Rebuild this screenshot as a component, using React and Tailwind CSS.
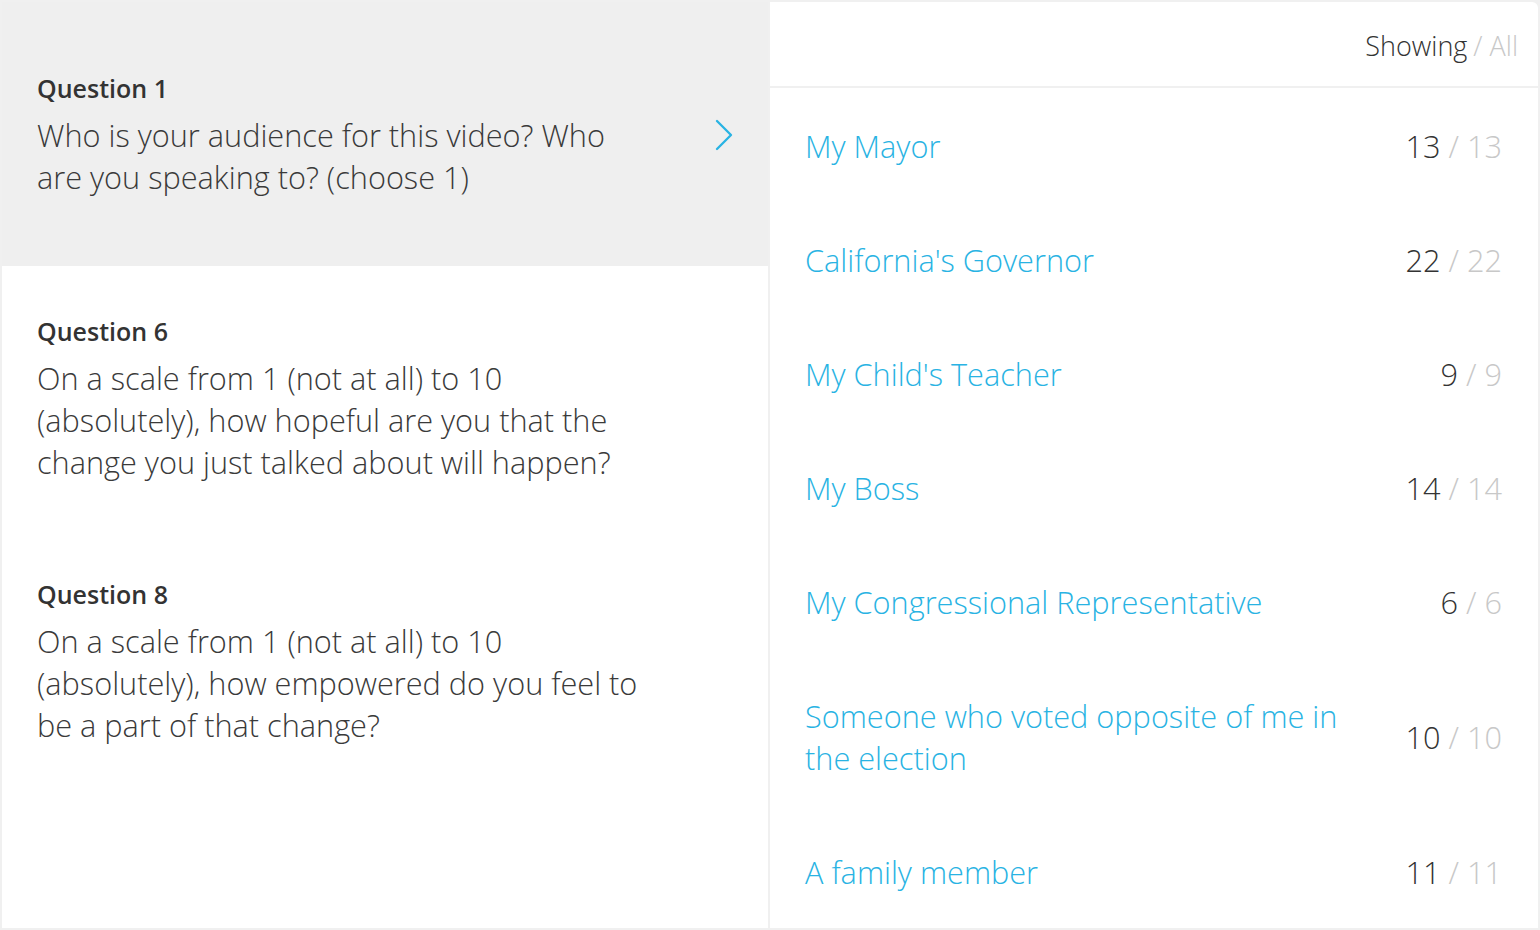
import { ChevronRight } from "lucide-react";

const questions = [
  {
    label: "Question 1",
    text: "Who is your audience for this video? Who are you speaking to? (choose 1)",
    active: true,
  },
  {
    label: "Question 6",
    text: "On a scale from 1 (not at all) to 10 (absolutely), how hopeful are you that the change you just talked about will happen?",
  },
  {
    label: "Question 8",
    text: "On a scale from 1 (not at all) to 10 (absolutely), how empowered do you feel to be a part of that change?",
  },
];

const answers = [
  { name: "My Mayor", showing: 13, all: 13 },
  { name: "California's Governor", showing: 22, all: 22 },
  { name: "My Child's Teacher", showing: 9, all: 9 },
  { name: "My Boss", showing: 14, all: 14 },
  { name: "My Congressional Representative", showing: 6, all: 6 },
  { name: "Someone who voted opposite of me in the election", showing: 10, all: 10 },
  { name: "A family member", showing: 11, all: 11 },
];

export default function App() {
  return (
    <div
      className="w-[1540px] h-[930px] bg-[#f0f0f0] p-[2px] flex gap-[2px] overflow-hidden"
      style={{ fontFamily: '"Open Sans", "Noto Sans", sans-serif' }}
    >
      {/* Questions */}
      <div className="w-[766px] bg-white flex flex-col">
        {questions.map((q, i) => (
          <div
            key={q.label}
            className={
              q.active
                ? "h-[264px] bg-[#efefef] flex items-center pl-[35px] pr-[16px] pt-[2px]"
                : i === 1
                ? "pt-[49px] pb-[46px] pl-[35px]"
                : "pt-[49px] pl-[35px]"
            }
          >
            <div className={q.active ? "w-[592px]" : "w-[612px]"}>
              <div className="text-[25px] leading-[32px] font-semibold text-[#333] mb-[10px]">
                {q.label}
              </div>
              <div className="text-[30.7px] leading-[42px] font-light text-[#3a3a3a]">
                {q.text}
              </div>
            </div>
            {q.active && (
              <ChevronRight
                className="ml-auto text-[#29b3e3]"
                size={56}
                strokeWidth={1}
              />
            )}
          </div>
        ))}
      </div>

      {/* Answers */}
      <div className="flex-1 bg-white rounded-tr-[6px] flex flex-col">
        <div className="h-[88px] border-b-2 border-[#f0f0f0] flex items-center justify-end pr-[20px] pt-[4px] text-[27px] font-light">
          <span className="text-[#333]">Showing</span>
          <span className="text-[#c8c8c8] ml-[6px]">/ All</span>
        </div>
        {answers.map((a) => (
          <div
            key={a.name}
            className="flex items-center pt-[37px] pb-[35px] pl-[35px] pr-[36px] font-light text-[30.7px] leading-[42px]"
          >
            <div className="w-[540px] text-[#29b3e3]">{a.name}</div>
            <div className="ml-auto whitespace-nowrap">
              <span className="text-[#333]">{a.showing}</span>
              <span className="text-[#c8c8c8]"> / {a.all}</span>
            </div>
          </div>
        ))}
      </div>
    </div>
  );
}
